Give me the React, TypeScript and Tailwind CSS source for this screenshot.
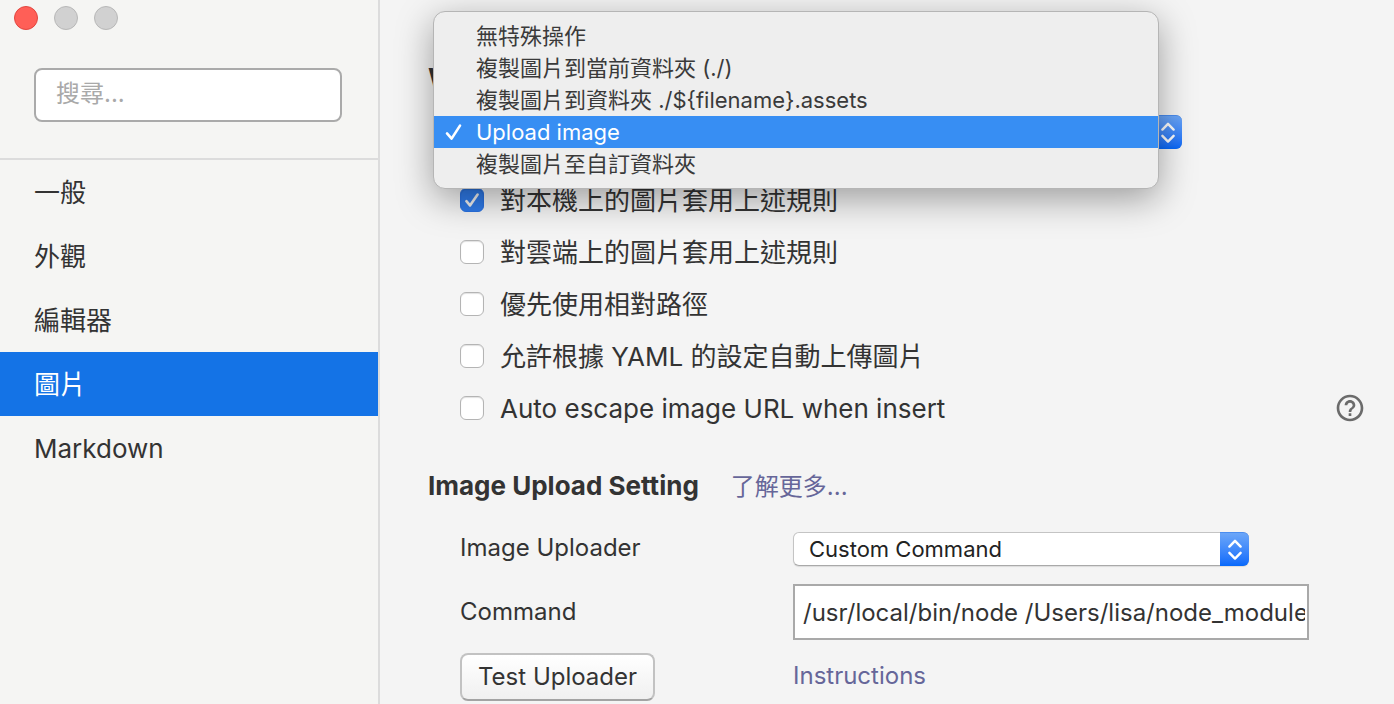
import { useState } from "react";
import { MdHelpOutline } from "react-icons/md";

const navItems = ["一般", "外觀", "編輯器", "圖片", "Markdown"];

const insertActions = [
  "無特殊操作",
  "複製圖片到當前資料夾 (./)",
  "複製圖片到資料夾 ./${filename}.assets",
  "Upload image",
  "複製圖片至自訂資料夾",
];

const rules = [
  { id: "local", label: "對本機上的圖片套用上述規則", checked: true },
  { id: "online", label: "對雲端上的圖片套用上述規則", checked: false },
  { id: "relative", label: "優先使用相對路徑", checked: false },
  { id: "yaml", label: "允許根據 YAML 的設定自動上傳圖片", checked: false },
  { id: "escape", label: "Auto escape image URL when insert", checked: false, help: true },
];

function Stepper() {
  return (
    <span className="pointer-events-none col-start-1 row-start-1 flex h-[34px] w-[29px] items-center justify-center justify-self-end rounded-r-[6px] border-t border-[#4a8df0] bg-linear-to-b from-[#6ba6f8] to-[#0469fb]">
      <svg viewBox="0 0 14 22" className="h-[22px] w-[14px]" fill="none" stroke="white" strokeWidth="2.4" strokeLinecap="round" strokeLinejoin="round" aria-hidden="true">
        <path d="M1.4 7.6 7 1.8 12.6 7.6M1.4 13.8 7 19.6 12.6 13.8" />
      </svg>
    </span>
  );
}

function Checkbox({ id, defaultChecked }: { id: string; defaultChecked: boolean }) {
  return (
    <span className="grid size-6 shrink-0">
      <input
        id={id}
        type="checkbox"
        defaultChecked={defaultChecked}
        className="peer col-start-1 row-start-1 size-6 appearance-none rounded-[6px] border border-[#b4b4b4] bg-white shadow-[inset_0_1px_1px_rgba(0,0,0,0.12)] checked:border-[#2a72e2] checked:bg-[#2f7bea]"
      />
      <svg viewBox="0 0 24 24" className="pointer-events-none invisible col-start-1 row-start-1 size-6 peer-checked:visible" fill="none" stroke="#f2f2f2" strokeWidth="2.6" strokeLinecap="round" strokeLinejoin="round" aria-hidden="true">
        <path d="M6.4 13.2 10 17.4 17.6 6.6" />
      </svg>
    </span>
  );
}

export default function App() {
  const [section, setSection] = useState("圖片");
  const [action, setAction] = useState("Upload image");

  return (
    <div className="flex h-screen overflow-hidden bg-[#f4f4f4] font-['Inter','Noto_Sans_CJK_TC',sans-serif] text-[#333]">
      <aside className="flex w-[380px] shrink-0 flex-col border-r-2 border-[#dcdcdc] bg-[#f5f5f3]">
        <div className="flex gap-4 px-3.5 pt-1.5">
          <button aria-label="關閉" className="size-6 rounded-full border border-[#e2463f] bg-[#ff5f57]" />
          <button aria-label="縮小" className="size-6 rounded-full border border-[#b8b8b8] bg-[#d1d1d1]" />
          <button aria-label="放大" className="size-6 rounded-full border border-[#b8b8b8] bg-[#d1d1d1]" />
        </div>
        <div className="border-b-2 border-[#dcdcdc] px-[34px] pt-[38px] pb-9">
          <input
            type="search"
            aria-label="搜尋"
            placeholder="搜尋..."
            className="block h-[54px] w-[308px] rounded-lg border-2 border-[#aaa] bg-white px-5 pb-1 text-2xl outline-none placeholder:text-[#a9a9a9]"
          />
        </div>
        <nav className="flex flex-col">
          {navItems.map((item) => (
            <a
              key={item}
              href="#"
              onClick={() => setSection(item)}
              className={
                item === section
                  ? "flex h-16 items-center bg-[#1473e6] px-[34px] text-[26px] text-white"
                  : "flex h-16 items-center px-[34px] text-[26px]"
              }
            >
              {item}
            </a>
          ))}
        </nav>
      </aside>

      <main className="min-w-0 flex-1 pt-[58px] pr-7 pl-12">
        <section>
          <h2 className="h-10 text-[26px] leading-10 font-bold">W</h2>
          <div className="relative mt-[17px] ml-[33px] grid w-[721px]">
            <button
              aria-haspopup="listbox"
              aria-expanded="true"
              aria-label={action}
              className="col-start-1 row-start-1 h-[34px] rounded-[6px] border border-[#c4c4c4] bg-white"
            />
            <Stepper />
            <ul
              role="listbox"
              className="absolute -top-[104px] -left-7 z-10 w-[726px] rounded-[12px] border border-[#b5b5b5] bg-[#eeeeee] py-2 text-[22px] shadow-[0_10px_36px_rgba(0,0,0,0.36)]"
            >
              {insertActions.map((name) => (
                <li
                  key={name}
                  role="option"
                  aria-selected={name === action}
                  onClick={() => setAction(name)}
                  className={
                    name === action
                      ? "flex h-8 items-center bg-[#378ef3] text-white"
                      : "flex h-8 items-center text-[#3a3a3a]"
                  }
                >
                  <span className="flex w-[42px] shrink-0 pl-[11px]">
                    {name === action && (
                      <svg viewBox="0 0 18 18" className="size-[18px]" fill="none" stroke="white" strokeWidth="2.6" strokeLinecap="round" strokeLinejoin="round" aria-hidden="true">
                        <path d="M2 10.4 6.6 15.6 15 2.6" />
                      </svg>
                    )}
                  </span>
                  {name}
                </li>
              ))}
            </ul>
          </div>
          <div className="mt-[25px] pl-8">
            {rules.map((rule) => (
              <div key={rule.id} className="flex h-[52px] items-center gap-4">
                <Checkbox id={rule.id} defaultChecked={rule.checked} />
                <label htmlFor={rule.id} className="text-[26px]">
                  {rule.label}
                </label>
                {rule.help && (
                  <button aria-label="說明" className="ml-auto text-[#6b6b6b]">
                    <MdHelpOutline className="size-8" />
                  </button>
                )}
              </div>
            ))}
          </div>
        </section>

        <section className="mt-8">
          <div className="flex h-10 items-baseline gap-8">
            <h2 className="text-[26px] leading-10 font-bold">Image Upload Setting</h2>
            <a href="#" className="text-2xl leading-10 text-[#666699]">
              了解更多...
            </a>
          </div>
          <div className="mt-2.5 pl-8 text-2xl">
            <div className="flex h-16 items-center">
              <label htmlFor="uploader" className="w-[333px] shrink-0">
                Image Uploader
              </label>
              <div className="grid w-[456px] pt-0.5">
                <select
                  id="uploader"
                  className="col-start-1 row-start-1 h-[34px] appearance-none rounded-[6px] border border-[#c4c4c4] border-b-[#a9a9a9] bg-white pr-10 pl-[15px] text-[22px] leading-8 text-[#222] shadow-[0_1px_1px_rgba(0,0,0,0.1)] outline-none"
                >
                  <option>Custom Command</option>
                </select>
                <Stepper />
              </div>
            </div>
            <div className="flex h-16 items-center">
              <label htmlFor="command" className="w-[333px] shrink-0">
                Command
              </label>
              <input
                id="command"
                type="text"
                defaultValue="/usr/local/bin/node /Users/lisa/node_modules/.bin/picgo upload"
                className="h-14 w-[516px] border-2 border-[#a9a9a9] bg-white pr-0.5 pl-2 outline-none"
              />
            </div>
            <div className="flex h-16 items-center">
              <div className="w-[333px] shrink-0 pt-0.5">
                <button className="h-12 rounded-lg border-2 border-[#c2c2c2] border-b-[#a3a3a3] bg-linear-to-b from-white to-[#f0f0f0] px-4 whitespace-nowrap">
                  Test Uploader
                </button>
              </div>
              <a href="#" className="text-[#666699]">
                Instructions
              </a>
            </div>
          </div>
        </section>
      </main>
    </div>
  );
}
